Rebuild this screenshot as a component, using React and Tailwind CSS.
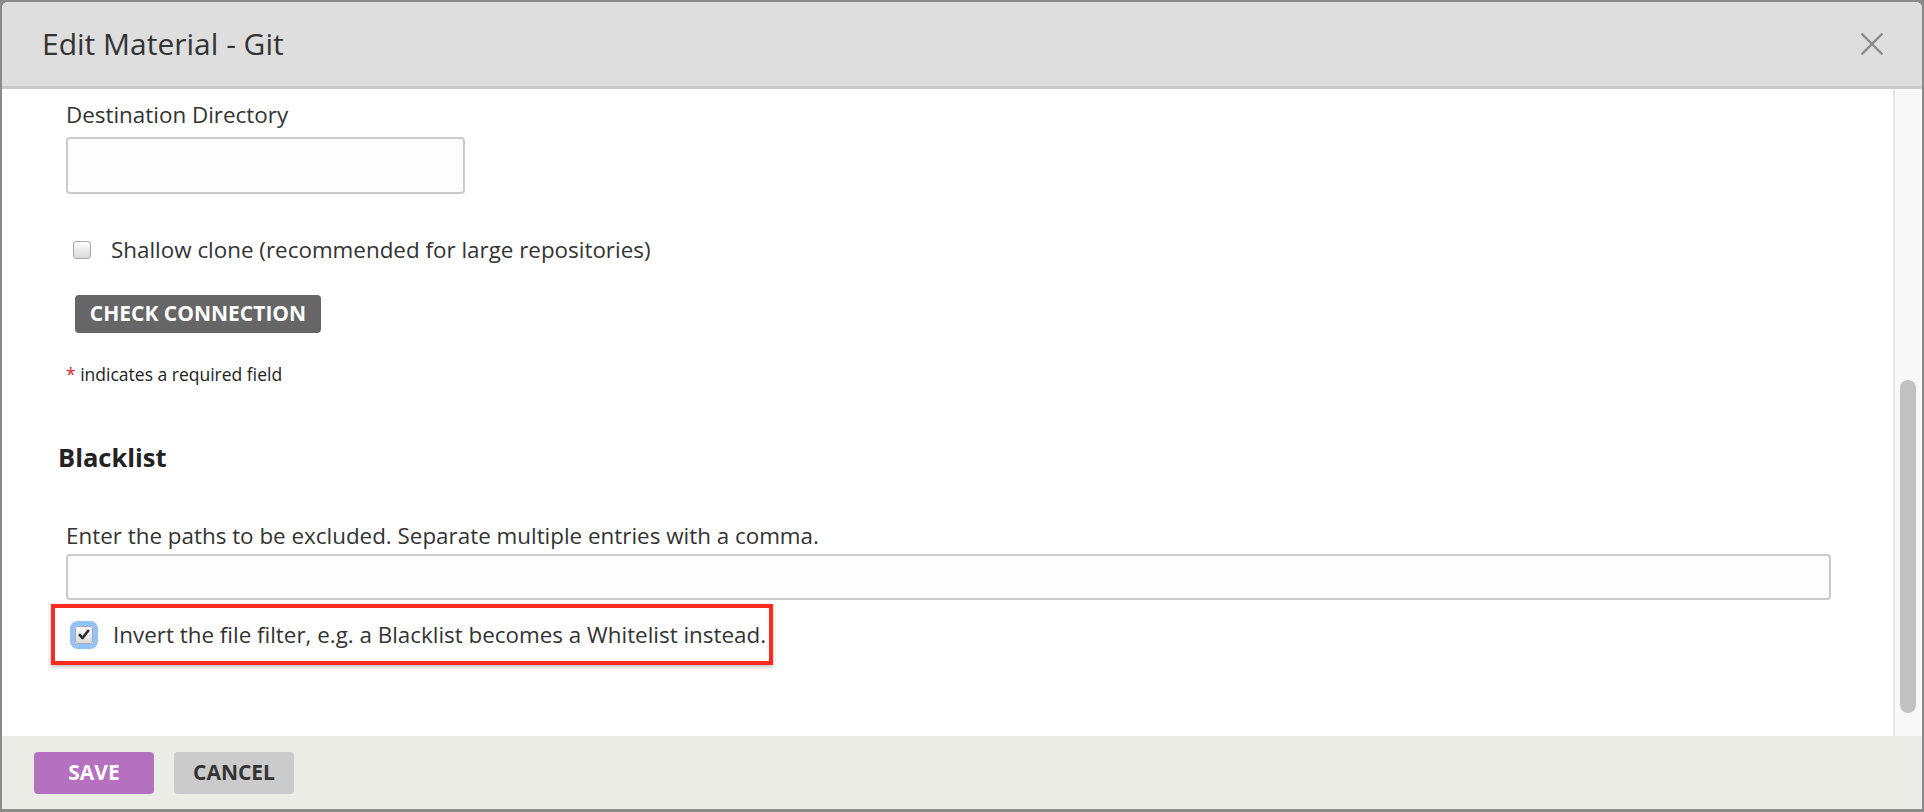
import React from "react";

const font = { fontFamily: '"Open Sans", "Noto Sans", Arial, sans-serif' };

function Checkbox({ checked }) {
  return (
    <span
      className={
        "flex h-[18px] w-[18px] shrink-0 items-center justify-center rounded-[3px] border border-[#a9a9a9] bg-gradient-to-b from-[#fdfdfd] to-[#d9d9d9] " +
        (checked ? "ring-[5px] ring-[#93c3f6]" : "")
      }
    >
      {checked && (
        <svg width="12" height="11" viewBox="0 0 12 11">
          <path d="M1.8 6 L4.6 9 L10.2 1.8" fill="none" stroke="#2b2b2b" strokeWidth="2.6" strokeLinecap="round" strokeLinejoin="round" />
        </svg>
      )}
    </span>
  );
}

export default function App() {
  return (
    <div style={font} className="h-[812px] w-[1924px] overflow-hidden bg-[#8a8a8a] pt-[2px] pr-[2px] pb-[3px] pl-[2px] text-[#333]">
      <div className="flex h-full w-full flex-col overflow-hidden rounded-t-[6px] bg-white">
        {/* Header */}
        <div className="flex h-[87px] shrink-0 items-center justify-between border-b-[3px] border-[#c9c9c9] bg-[#dedede] pl-[40px] pr-[39px]">
          <h1 className="text-[30px] font-medium leading-none text-[#333]">Edit Material - Git</h1>
          <svg width="22" height="22" viewBox="0 0 22 22">
            <path d="M1.5 1.5 L20.5 20.5 M20.5 1.5 L1.5 20.5" stroke="#8a8a8a" strokeWidth="2.4" strokeLinecap="square" />
          </svg>
        </div>

        {/* Body */}
        <div className="flex h-[647px] shrink-0">
          <div className="flex-1 overflow-hidden pt-[12px]">
            <div className="pl-[64px]">
              <label className="block text-[22.4px] leading-[28px]">Destination Directory</label>
              <div className="mt-[8px] h-[57px] w-[399px] rounded-[4px] border-2 border-[#cacaca] bg-[#fdfdfd]" />
              <div className="mt-[42px] flex h-[28px] items-center pl-[7px]">
                <Checkbox />
                <span className="ml-[20px] text-[22.4px] leading-[28px]">Shallow clone (recommended for large repositories)</span>
              </div>
              <button className="mt-[31px] ml-[9px] flex h-[38px] w-[246px] items-center justify-center rounded-[4px] bg-[#666666] text-[21px] font-bold text-white">
                CHECK CONNECTION
              </button>
              <p className="mt-[29px] text-[17.5px] leading-[24px] text-[#222]">
                <span className="text-[#e0262b]">*</span> indicates a required field
              </p>
            </div>
            <h2 className="mt-[56px] pl-[56px] text-[25.5px] font-bold leading-[30px] text-[#222]">Blacklist</h2>
            <div className="pl-[64px] pr-[62px]">
              <label className="mt-[50px] block text-[22.4px] leading-[28px]">Enter the paths to be excluded. Separate multiple entries with a comma.</label>
              <div className="mt-[4px] h-[46px] w-full rounded-[4px] border-2 border-[#cacaca] bg-[#fdfdfd]" />
            </div>
            <div className="ml-[49px] mt-[4px] flex h-[61px] w-[722px] items-center border-4 border-[#fc2b1f] pl-[20px] shadow-[0_2px_4px_rgba(0,0,0,0.25)]">
              <Checkbox checked />
              <span className="ml-[20px] text-[22.4px] leading-[28px]">Invert the file filter, e.g. a Blacklist becomes a Whitelist instead.</span>
            </div>
          </div>
          {/* Scrollbar */}
          <div className="w-[29px] shrink-0 border-l-2 border-[#e6e6e6] bg-[#f8f8f8] pl-[5px]">
            <div className="mt-[291px] h-[333px] w-[16px] rounded-full bg-[#c1c1c1]" />
          </div>
        </div>

        {/* Footer */}
        <div className="flex flex-1 items-center gap-[20px] bg-[#ecece7] pl-[32px]">
          <button className="flex h-[42px] w-[120px] items-center justify-center rounded-[4px] bg-[#b570c0] text-[21px] font-bold text-white">
            SAVE
          </button>
          <button className="flex h-[42px] w-[120px] items-center justify-center rounded-[4px] bg-[#cbcbcb] text-[21px] font-bold text-[#333]">
            CANCEL
          </button>
        </div>
      </div>
    </div>
  );
}
